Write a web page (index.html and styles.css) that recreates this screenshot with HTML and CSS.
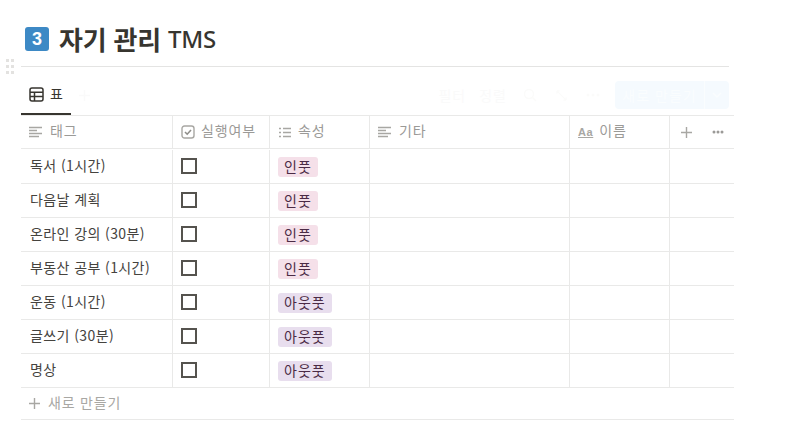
FILE: index.html
```html
<!DOCTYPE html>
<html lang="ko">
<head>
<meta charset="utf-8">
<title>자기 관리 TMS</title>
<link rel="stylesheet" href="styles.css">
</head>
<body>
<div class="page">
  <span class="grip"><svg width="10" height="15" viewBox="0 0 10 15"><g fill="#e3e2e0"><rect x="1" y="0" width="3" height="3"/><rect x="6" y="0" width="3" height="3"/><rect x="1" y="6" width="3" height="3"/><rect x="6" y="6" width="3" height="3"/><rect x="1" y="12" width="3" height="3"/><rect x="6" y="12" width="3" height="3"/></g></svg></span>
  <h1 class="title"><span class="badge">3</span><span class="title-ko">자기 관리</span><span class="title-en">TMS</span></h1>
  <div class="rule"></div>
  <div class="toolbar">
    <div class="tab">
      <svg class="tab-icon" width="15" height="15" viewBox="0 0 15 15"><rect x="1" y="1" width="13" height="13" rx="2" fill="none" stroke="#37352f" stroke-width="1.5"/><path d="M1 5.3h13M1 9.6h13M5.5 5.3V14" fill="none" stroke="#37352f" stroke-width="1.5"/></svg>
      <span class="tab-label">표</span>
    </div>
    <svg class="tab-add" width="11" height="11" viewBox="0 0 11 11"><path d="M5.5 0v11M0 5.5h11" stroke="#fafafa" stroke-width="1.4"/></svg>
    <div class="actions">
      <span class="act-filter">필터</span><span class="act-sort">정렬</span>
      <svg class="act-search" width="14" height="14" viewBox="0 0 14 14"><circle cx="6" cy="6" r="4.5" fill="none" stroke="#fbfbfa" stroke-width="1.4"/><path d="M9.5 9.5l3.5 3.5" stroke="#fbfbfa" stroke-width="1.4"/></svg>
      <svg class="act-expand" width="11" height="11" viewBox="0 0 12 12"><path d="M1 1l10 10M1 1h3M1 1v3M11 11H8M11 11V8" fill="none" stroke="#fbfbfa" stroke-width="1.2"/></svg>
      <svg class="act-more" width="14" height="4" viewBox="0 0 14 4"><g fill="#fbfbfa"><circle cx="2" cy="2" r="1.5"/><circle cx="7" cy="2" r="1.5"/><circle cx="12" cy="2" r="1.5"/></g></svg>
      <div class="new-btn"><span class="new-label">새로 만들기</span><span class="new-caret"><svg width="10" height="6" viewBox="0 0 10 6"><path d="M1 1l4 4 4-4" fill="none" stroke="#fafdfe" stroke-width="1.4"/></svg></span></div>
    </div>
  </div>
  <div class="table">
    <div class="row head">
      <div class="cell c1"><svg class="hi" width="13" height="12" viewBox="0 0 13 12"><path d="M0 1.5h13M0 4.5h8M0 7.5h13M0 10.5h10" stroke="#a8a7a3" stroke-width="1.6"/></svg><span class="hl">태그</span></div>
      <div class="cell c2"><svg class="hi hi-check" width="14" height="14" viewBox="0 0 14 14"><rect x="1" y="1" width="12" height="12" rx="2.5" fill="none" stroke="#a8a7a3" stroke-width="1.4"/><path d="M4 7l2.2 2.2L10 5" fill="none" stroke="#8f8e8a" stroke-width="1.6"/></svg><span class="hl">실행여부</span></div>
      <div class="cell c3"><svg class="hi hi-list" width="12" height="11" viewBox="0 0 12 11"><path d="M0 1.5h2M4 1.5h8M0 5.5h2M4 5.5h8M0 9.5h2M4 9.5h8" stroke="#a8a7a3" stroke-width="1.7"/></svg><span class="hl">속성</span></div>
      <div class="cell c4"><svg class="hi" width="13" height="12" viewBox="0 0 13 12"><path d="M0 1.5h13M0 4.5h8M0 7.5h13M0 10.5h10" stroke="#a8a7a3" stroke-width="1.6"/></svg><span class="hl">기타</span></div>
      <div class="cell c5"><span class="aa">Aa</span><span class="hl">이름</span></div>
      <div class="cell c6"><svg class="add-col" width="11" height="11" viewBox="0 0 11 11"><path d="M5.5 0v11M0 5.5h11" stroke="#a8a7a3" stroke-width="1.4"/></svg><svg class="more" width="12" height="4" viewBox="0 0 12 4"><g fill="#9b9a97"><circle cx="2" cy="2" r="1.5"/><circle cx="6" cy="2" r="1.5"/><circle cx="10" cy="2" r="1.5"/></g></svg></div>
    </div>
    <div class="row"><div class="cell c1">독서 (1시간)</div><div class="cell c2"><span class="box"></span></div><div class="cell c3"><span class="tag pink">인풋</span></div><div class="cell c4"></div><div class="cell c5"></div><div class="cell c6"></div></div>
    <div class="row"><div class="cell c1">다음날 계획</div><div class="cell c2"><span class="box"></span></div><div class="cell c3"><span class="tag pink">인풋</span></div><div class="cell c4"></div><div class="cell c5"></div><div class="cell c6"></div></div>
    <div class="row"><div class="cell c1">온라인 강의 (30분)</div><div class="cell c2"><span class="box"></span></div><div class="cell c3"><span class="tag pink">인풋</span></div><div class="cell c4"></div><div class="cell c5"></div><div class="cell c6"></div></div>
    <div class="row"><div class="cell c1">부동산 공부 (1시간)</div><div class="cell c2"><span class="box"></span></div><div class="cell c3"><span class="tag pink">인풋</span></div><div class="cell c4"></div><div class="cell c5"></div><div class="cell c6"></div></div>
    <div class="row"><div class="cell c1">운동 (1시간)</div><div class="cell c2"><span class="box"></span></div><div class="cell c3"><span class="tag purple">아웃풋</span></div><div class="cell c4"></div><div class="cell c5"></div><div class="cell c6"></div></div>
    <div class="row"><div class="cell c1">글쓰기 (30분)</div><div class="cell c2"><span class="box"></span></div><div class="cell c3"><span class="tag purple">아웃풋</span></div><div class="cell c4"></div><div class="cell c5"></div><div class="cell c6"></div></div>
    <div class="row"><div class="cell c1">명상</div><div class="cell c2"><span class="box"></span></div><div class="cell c3"><span class="tag purple">아웃풋</span></div><div class="cell c4"></div><div class="cell c5"></div><div class="cell c6"></div></div>
    <div class="new-row"><svg class="new-plus" width="11" height="11" viewBox="0 0 11 11"><path d="M5.5 0v11M0 5.5h11" stroke="#a8a7a3" stroke-width="1.4"/></svg><span>새로 만들기</span></div>
  </div>
</div>
</body>
</html>
```
FILE: styles.css
```css
* { box-sizing: border-box; }
html, body { margin: 0; padding: 0; background: #fff; }
body {
  width: 785px;
  height: 439px;
  overflow: hidden;
  font-family: "Noto Sans CJK KR", "Noto Sans", sans-serif;
  color: #37352f;
}
.page { position: relative; padding: 21px 0 0 21px; width: 785px; }
.grip { position: absolute; left: 5px; top: 59px; line-height: 0; }
.title {
  margin: 0;
  height: 36px;
  display: flex;
  align-items: center;
  font-weight: 700;
  font-size: 26px;
  line-height: 36px;
  padding-left: 4px;
}
.badge {
  width: 24px;
  height: 24px;
  border-radius: 3px;
  background: #3d89c5;
  color: #fff;
  font: 700 18px/24px "Liberation Sans", sans-serif;
  text-align: center;
  margin-right: 10px;
}
.title-ko { letter-spacing: -.2px; }
.title-en { font-weight: 500; margin-left: 7px; font-family: "Noto Sans", sans-serif; font-size: 24px; letter-spacing: -.2px; }
.rule { width: 708px; height: 1px; background: #e4e4e3; margin-top: 9px; }
.toolbar { display: flex; align-items: center; height: 48px; width: 708px; }
.tab {
  width: 50px;
  height: 48px;
  padding: 20px 0 0 8px;
  display: flex;
  align-items: flex-start;
  gap: 6px;
  font-size: 14px;
  line-height: 15px;
  border-bottom: 2px solid #37352f;
}
.tab-icon { flex: none; }
.tab-label { margin-top: -1px; }
.tab-add { margin-left: 8px; margin-top: 8px; }
.actions {
  margin-left: auto;
  display: flex;
  align-items: center;
  font-size: 14px;
  letter-spacing: 1px;
  color: #fafafa;
  margin-top: 8px;
}
.act-sort { margin-left: 13px; }
.act-search { margin-left: 16px; }
.act-expand { margin-left: 19px; }
.act-more { margin-left: 19px; }
.new-btn {
  width: 114px;
  height: 28px;
  background: #f5fafe;
  border-radius: 4px;
  display: flex;
  align-items: center;
  color: #fafdfe;
  margin-left: 15px;
}
.new-label { flex: 1; text-align: center; border-right: 1px solid #fafdfe; line-height: 28px; }
.new-caret { width: 24px; text-align: center; line-height: 0; }
.table { width: 713px; border-top: 1px solid #e9e9e8; }
.row {
  display: flex;
  height: 34px;
  border-bottom: 1px solid #e9e9e8;
  font-size: 14px;
  letter-spacing: .4px;
  color: #45433e;
}
.row.head { height: 33px; margin-bottom: 1px; color: #9b9a97; letter-spacing: .9px; }
.cell {
  display: flex;
  align-items: center;
  padding-left: 8px;
  border-right: 1px solid #e9e9e8;
  flex: none;
}
.c1 { width: 152px; padding-left: 9px; padding-bottom: 3px; }
.c2 { width: 97px; }
.c3 { width: 100px; }
.c4 { width: 200px; }
.c5 { width: 100px; }
.c6 { flex: 1; border-right: 0; }
.head .cell { padding-bottom: 0; }
.head .c1 { padding-left: 8px; }
.hl { margin-bottom: 4px; }
.hi { margin-right: 8px; flex: none; }
.hi-check { margin-right: 6px; }
.hi-list { margin-left: 1px; margin-right: 7px; }
.aa {
  font: 700 11px "Liberation Sans", sans-serif;
  letter-spacing: .6px;
  color: #a8a7a3;
  text-decoration: underline;
  margin-right: 6px;
}
.add-col { margin-left: 3px; flex: none; }
.more { margin-left: 20px; flex: none; }
.box { width: 16px; height: 16px; border: 2px solid #55534e; background: #fff; margin-bottom: 1px; }
.tag {
  display: block;
  height: 20px;
  line-height: 18px;
  padding: 0 6px;
  border-radius: 3px;
  font-size: 14px;
  letter-spacing: 1px;
  color: #4b2b45;
}
.pink { background: #f5e0e9; }
.purple { background: #e8deee; }
.new-row {
  height: 32px;
  padding-left: 8px;
  display: flex;
  align-items: center;
  border-bottom: 1px solid #e9e9e8;
  color: #a8a7a3;
  font-size: 14px;
  letter-spacing: .8px;
}
.new-row span { margin-bottom: 3px; }
.new-plus { margin-right: 8px; flex: none; }
```
